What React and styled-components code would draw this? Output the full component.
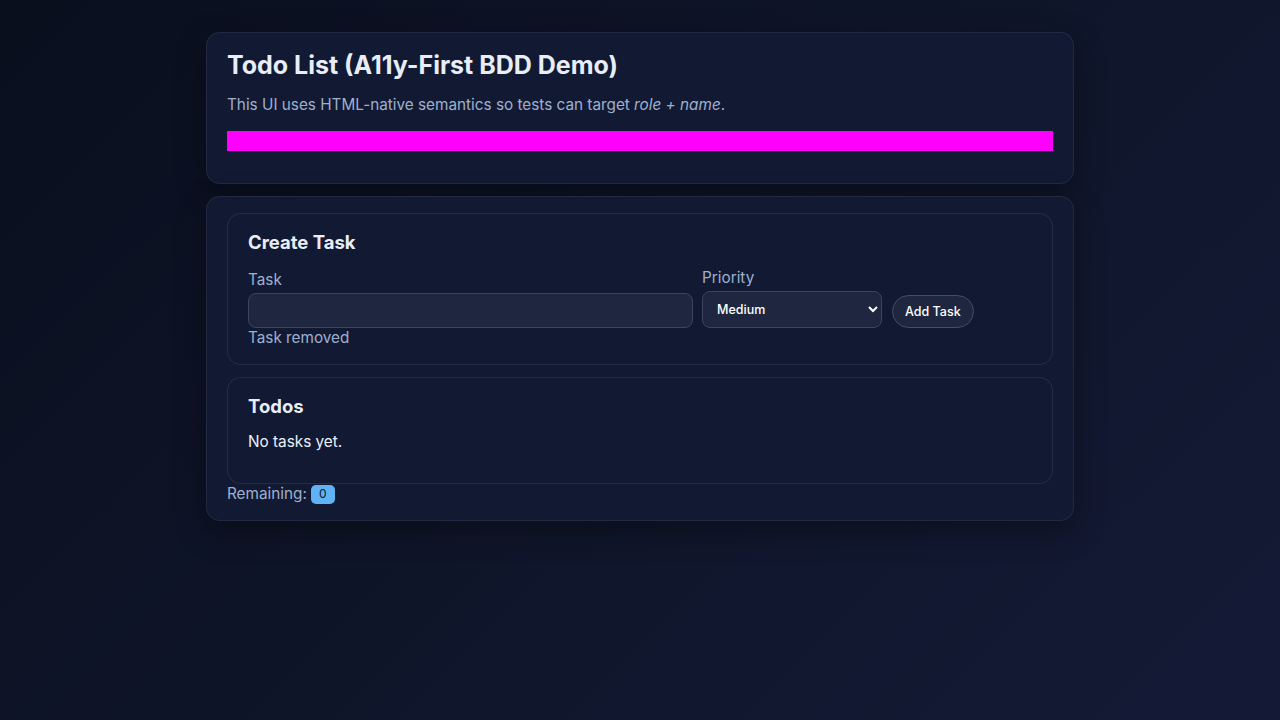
import React from 'react';
import styled, { createGlobalStyle } from 'styled-components';

const GlobalStyle = createGlobalStyle`
    html, body {
        margin: 0;
        min-height: 100%;
    }
    body {
        min-height: 720px;
        font-family: Inter, 'Noto Sans', sans-serif;
        color: #e6ebf5;
        background: linear-gradient(135deg, #0a0f1e 0%, #0f1529 50%, #141a36 100%);
    }
`;

const Main = styled.main`
    width: 868px;
    margin: 0 auto;
    padding-top: 32px;
    display: flex;
    flex-direction: column;
    gap: 12px;
`;

const Card = styled.section`
    background: #121a33;
    border: 1px solid rgba(255, 255, 255, 0.07);
    border-radius: 14px;
    padding: 16px 20px;
    box-shadow: 0 10px 30px rgba(0, 0, 0, 0.35);
`;

const Panel = styled.section`
    background: #121a33;
    border: 1px solid rgba(255, 255, 255, 0.08);
    border-radius: 14px;
    padding: 16px 20px;
    & + & {
        margin-top: 12px;
    }
`;

const Title = styled.h1`
    margin: 0;
    font-size: 25px;
    line-height: 33px;
    font-weight: 700;
    color: #e8edf7;
`;

const Lead = styled.p`
    margin: 11px 0 0;
    font-size: 15.3px;
    line-height: 24px;
    color: #9fb0cf;
`;

const Banner = styled.div`
    height: 20px;
    margin: 14px 0 16px;
    background: #ff00ff;
`;

const Heading = styled.h2`
    margin: 0;
    font-size: 18.5px;
    line-height: 24px;
    font-weight: 700;
    color: #e8edf7;
`;

const Row = styled.div`
    display: flex;
    align-items: flex-end;
    margin-top: 12px;
`;

const Field = styled.div`
    display: flex;
    flex-direction: column;
    gap: 1px;
    width: ${p => p.$width}px;
    margin-right: ${p => p.$gap || 0}px;
`;

const Label = styled.label`
    font-size: 15.3px;
    line-height: 24px;
    color: #9fb0cf;
`;

const Input = styled.input`
    box-sizing: border-box;
    height: 35px;
    width: 100%;
    background: #1f2740;
    border: 1px solid #3b4560;
    border-radius: 8px;
    color: #e8edf7;
    font-family: inherit;
    font-size: 14px;
    padding: 0 10px;
    outline: none;
`;

const Select = styled.select`
    box-sizing: border-box;
    height: 37px;
    width: 100%;
    background: #1f2740;
    border: 1px solid #3b4560;
    border-radius: 8px;
    color: #ffffff;
    font-family: Inter, sans-serif;
    font-size: 12.5px;
    font-weight: 500;
    padding: 0 10px;
`;

const Button = styled.button`
    height: 33px;
    padding: 0 12px;
    background: #1f2740;
    border: 1px solid #444e68;
    border-radius: 999px;
    color: #ffffff;
    font-family: Inter, sans-serif;
    font-size: 12.5px;
    font-weight: 500;
`;

const Status = styled.div`
    font-size: 15.3px;
    line-height: 21px;
    margin-top: -1px;
    color: #9fb0cf;
`;

const Empty = styled.p`
    margin: 12px 0 13px;
    font-size: 15.3px;
    line-height: 24px;
    color: #eef1f8;
`;

const Footer = styled.div`
    display: flex;
    align-items: center;
    gap: 4px;
    margin: 0;
    font-size: 15.3px;
    line-height: 20px;
    color: #9fb0cf;
`;

const Badge = styled.span`
    display: inline-flex;
    align-items: center;
    justify-content: center;
    min-width: 24px;
    height: 19px;
    border-radius: 5px;
    background: #5fb3f4;
    color: #0d1730;
    font-size: 12px;
    line-height: 1;
`;

export default function App() {
    return (
        <>
            <GlobalStyle />
            <Main>
                <Card>
                    <Title>Todo List (A11y-First BDD Demo)</Title>
                    <Lead>
                        This UI uses HTML-native semantics so tests can target <em>role + name</em>.
                    </Lead>
                    <Banner role="status" />
                </Card>
                <Card>
                    <Panel>
                        <Heading>Create Task</Heading>
                        <Row>
                            <Field $width={445} $gap={9}>
                                <Label htmlFor="task">Task</Label>
                                <Input id="task" />
                            </Field>
                            <Field $width={180} $gap={10}>
                                <Label htmlFor="priority">Priority</Label>
                                <Select id="priority" defaultValue="medium">
                                    <option value="low">Low</option>
                                    <option value="medium">Medium</option>
                                    <option value="high">High</option>
                                </Select>
                            </Field>
                            <Button type="button">Add Task</Button>
                        </Row>
                        <Status>Task removed</Status>
                    </Panel>
                    <Panel>
                        <Heading>Todos</Heading>
                        <Empty>No tasks yet.</Empty>
                    </Panel>
                    <Footer>
                        Remaining: <Badge>0</Badge>
                    </Footer>
                </Card>
            </Main>
        </>
    );
}
